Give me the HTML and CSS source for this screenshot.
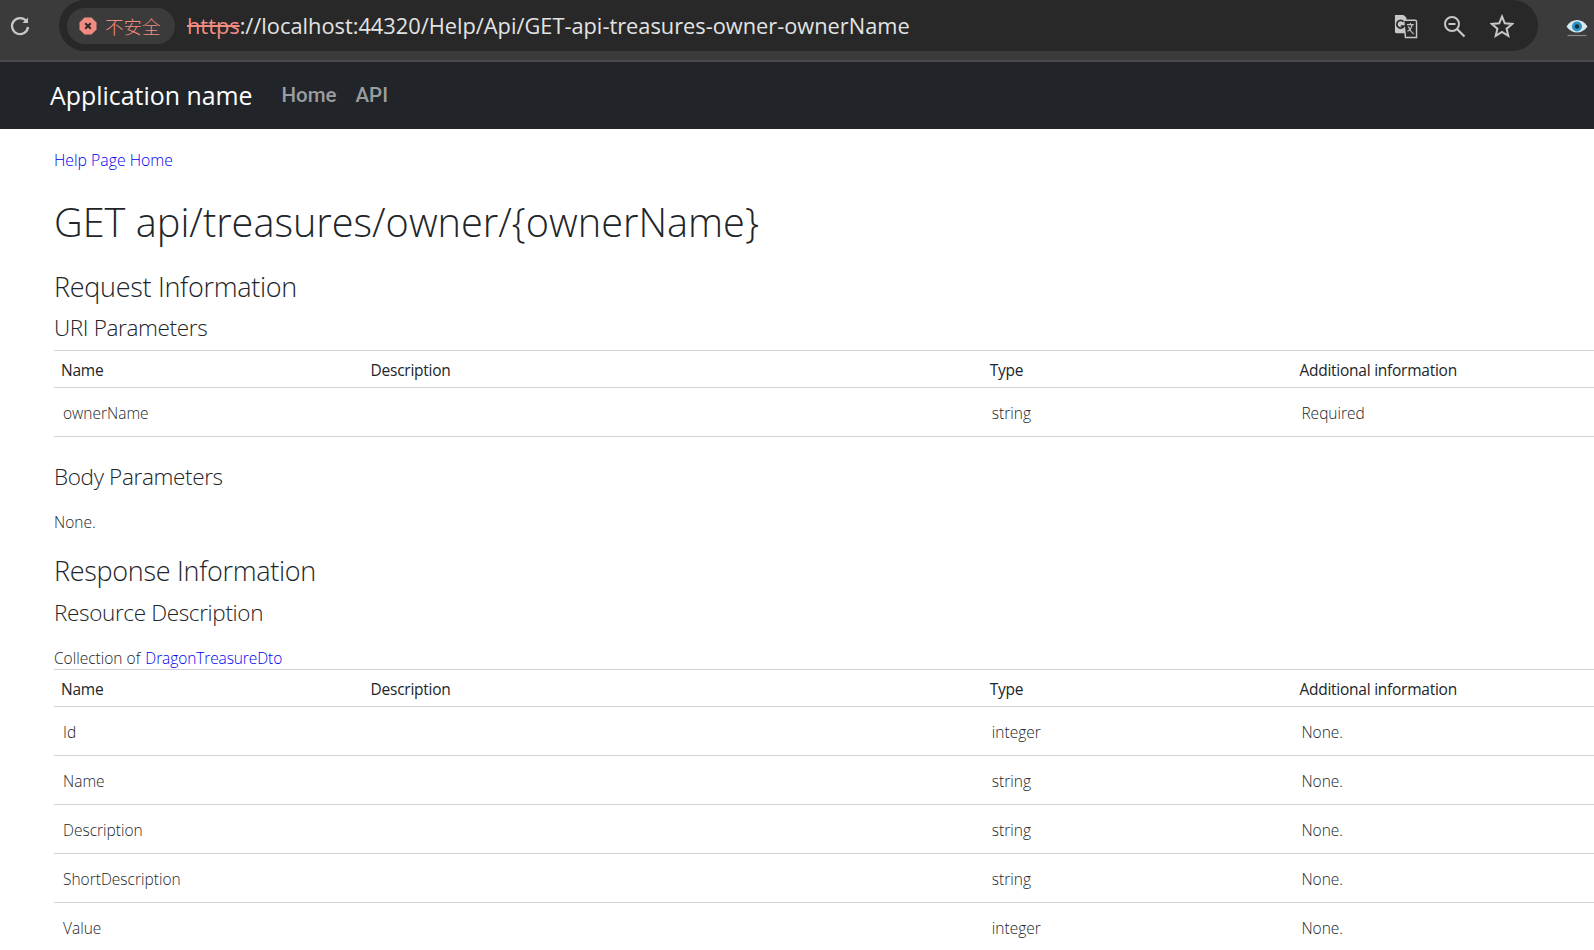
FILE: index.html
```html
<!DOCTYPE html>
<html lang="en">
<head>
	<meta charset="UTF-8">
	<title>GET api/treasures/owner/{ownerName}</title>
	<link rel="stylesheet" href="styles.css">
</head>
<body>

<div class="toolbar">
	<svg class="reload" viewBox="0 0 24 24" width="24" height="24">
		<path d="M18.6 7.500A8 8 0 1 0 20 13" fill="none" stroke="#c7c7c7" stroke-width="2.300"/>
		<path d="M20 3.500V9h-5.500z" fill="#c7c7c7"/>
	</svg>
	<div class="omnibox">
		<div class="chip">
			<svg viewBox="0 0 18 18" width="18" height="18">
				<polygon points="5.500,0.500 12.500,0.500 17.500,5.500 17.500,12.500 12.500,17.500 5.500,17.500 0.500,12.500 0.500,5.500" fill="#f28b82"/>
				<path d="M6.200 6.200l5.600 5.600M11.800 6.200l-5.600 5.600" stroke="#2b2b2b" stroke-width="2"/>
			</svg>
			<span class="chip-text">不安全</span>
		</div>
		<div class="url"><span class="scheme">https</span>://localhost:44320/Help/Api/GET-api-treasures-owner-ownerName</div>
		<div class="omni-icons">
			<svg viewBox="0 0 26 26" width="25" height="26">
				<path d="M2 1.500h9l3 3v16H3.500a1.500 1.500 0 0 1-1.500-1.500z" fill="#c7c7c7"/>
				<path d="M11 7h12a1.500 1.500 0 0 1 1.500 1.500V25H13z" fill="#2b2b2b" stroke="#c7c7c7" stroke-width="1.500"/>
				<path d="M11 8.500A4 4 0 1 0 11.500 13H8" fill="none" stroke="#2b2b2b" stroke-width="1.800"/>
				<path d="M14.500 11.500h7M18 10v1.500M20 11.500c-1 4-3 6-5 7M16 13.500c1 2.500 3 6 5.500 8" fill="none" stroke="#c7c7c7" stroke-width="1.200"/>
			</svg>
			<svg viewBox="0 0 24 24" width="24" height="24">
				<circle cx="10" cy="10" r="7" fill="none" stroke="#c7c7c7" stroke-width="2"/>
				<path d="M15 15l7.500 7.500" stroke="#c7c7c7" stroke-width="2.200"/>
				<path d="M6.500 10h7" stroke="#c7c7c7" stroke-width="2"/>
			</svg>
			<svg viewBox="0 0 24 24" width="24" height="24">
				<polygon points="12,2.500 14.800,9.300 22.200,9.900 16.600,14.700 18.300,21.900 12,18 5.700,21.900 7.400,14.700 1.800,9.900 9.200,9.300" fill="none" stroke="#c7c7c7" stroke-width="2"/>
			</svg>
		</div>
	</div>
	<svg class="eye" viewBox="0 0 24 24" width="24" height="24">
		<path d="M1.500 12.500c3-4.500 6.500-6.500 10.500-6.500s7.500 2 10.500 6.500c-3 4-6.500 6-10.500 6s-7.500-2-10.500-6z" fill="#d9e8ef"/>
		<circle cx="12" cy="12.500" r="5" fill="#2a93c4"/>
		<circle cx="12" cy="12.500" r="2.200" fill="#12303f"/>
		<path d="M2.500 21.500h19" stroke="#8a8a8a" stroke-width="1.200"/>
	</svg>
</div>

<nav class="navbar">
	<a class="brand" href="#">Application name</a>
	<a class="nav-link" href="#">Home</a>
	<a class="nav-link" href="#">API</a>
</nav>

<main class="content">
	<p class="home-link"><a href="#">Help Page Home</a></p>
	<h1>GET api/treasures/owner/{ownerName}</h1>

	<h2>Request Information</h2>
	<h3>URI Parameters</h3>
	<table>
		<thead>
			<tr><th>Name</th><th>Description</th><th>Type</th><th>Additional information</th></tr>
		</thead>
		<tbody>
			<tr><td>ownerName</td><td></td><td>string</td><td>Required</td></tr>
		</tbody>
	</table>

	<h3 class="body-params">Body Parameters</h3>
	<p class="none">None.</p>

	<h2 class="response">Response Information</h2>
	<h3 class="resource">Resource Description</h3>
	<p class="collection">Collection of <a href="#">DragonTreasureDto</a></p>
	<table>
		<thead>
			<tr><th>Name</th><th>Description</th><th>Type</th><th>Additional information</th></tr>
		</thead>
		<tbody>
			<tr><td>Id</td><td></td><td>integer</td><td>None.</td></tr>
			<tr><td>Name</td><td></td><td>string</td><td>None.</td></tr>
			<tr><td>Description</td><td></td><td>string</td><td>None.</td></tr>
			<tr><td>ShortDescription</td><td></td><td>string</td><td>None.</td></tr>
			<tr><td>Value</td><td></td><td>integer</td><td>None.</td></tr>
		</tbody>
	</table>
</main>

</body>
</html>
```

FILE: styles.css
```css
html, body {
	margin: 0;
	height: 950px;
	overflow: hidden;
}
body {
	background-color: #fff;
	color: #212529;
	font-family: "Open Sans", "Noto Sans CJK SC", sans-serif;
	font-weight: 300;
}
a {
	color: #0000f0;
	text-decoration: none;
}

/* browser toolbar */
.toolbar {
	display: flex;
	align-items: center;
	height: 62px;
	background-color: #3b3b3b;
	border-bottom: 2px solid #4a4a4a;
	padding-bottom: 9px;
	box-sizing: border-box;
}
.reload {
	margin-left: 8px;
	flex: none;
}
.omnibox {
	display: flex;
	align-items: center;
	width: 1479px;
	height: 51px;
	margin-left: 27px;
	padding-left: 8px;
	box-sizing: border-box;
	background-color: #282828;
	border-radius: 26px;
}
.chip {
	display: flex;
	align-items: center;
	gap: 8px;
	width: 108px;
	height: 36px;
	padding-left: 12px;
	box-sizing: border-box;
	background-color: #3b3b3b;
	border-radius: 18px;
}
.chip-text {
	color: #f28b82;
	font-family: "Noto Sans CJK SC", sans-serif;
	font-size: 18.500px;
	font-weight: 300;
}
.url {
	margin-left: 12px;
	margin-bottom: 1px;
	color: #e3e3e3;
	font-size: 21.800px;
	font-weight: 400;
	white-space: nowrap;
}
.scheme {
	color: #f28b82;
	text-decoration: line-through;
}
.omni-icons {
	display: flex;
	align-items: center;
	gap: 24px;
	margin-left: auto;
	margin-right: 24px;
}
.eye {
	margin-left: 27px;
	flex: none;
}

/* site nav */
.navbar {
	display: flex;
	align-items: center;
	height: 67px;
	padding: 0 0 2px 50px;
	box-sizing: border-box;
	background-color: #212529;
}
.brand {
	color: #fff;
	font-size: 24.900px;
	font-weight: 400;
	margin-right: 29px;
}
.nav-link {
	color: #9a9da0;
	font-family: Roboto, sans-serif;
	font-size: 20.500px;
	font-weight: 500;
	margin-right: 19px;
}

/* help page */
.content {
	width: 1548px;
	margin-left: 54px;
}
.home-link {
	margin: 0;
	padding-top: 20px;
	font-size: 15.800px;
	line-height: 22px;
}
h1, h2, h3 {
	font-weight: 300;
	margin: 0;
	color: #212529;
}
h1 {
	font-size: 39.700px;
	line-height: 56px;
	margin-top: 23px;
}
h2 {
	font-size: 27px;
	letter-spacing: -0.300px;
	line-height: 38px;
	margin-top: 18px;
}
h3 {
	font-size: 22.500px;
	letter-spacing: -0.350px;
	line-height: 32px;
	margin-top: 6px;
}
table {
	width: 100%;
	table-layout: fixed;
	border-collapse: collapse;
	margin-top: 6px;
}
th:nth-child(1), th:nth-child(3), th:nth-child(4) {
	width: 20%;
}
th {
	height: 37px;
	padding: 2px 7px 0;
	text-align: left;
	font-size: 15.500px;
	letter-spacing: -0.250px;
	font-weight: 400;
	border-top: 1px solid #d2d4d6;
	border-bottom: 1px solid #d2d4d6;
	box-sizing: border-box;
}
td {
	height: 49px;
	padding: 2px 9px 0;
	font-size: 15.500px;
	border-bottom: 1px solid #d2d4d6;
	box-sizing: border-box;
}
h3.body-params {
	margin-top: 24px;
}
.none {
	margin: 18px 0 0;
	font-size: 15.500px;
	line-height: 22px;
}
h2.response {
	margin-top: 19px;
}
h3.resource {
	margin-top: 7px;
}
.collection {
	margin: 18px 0 0;
	font-size: 15.500px;
	line-height: 22px;
}
.collection a {
	margin-left: 1px;
	letter-spacing: -0.100px;
}
.collection + table {
	margin-top: 0;
}
```
